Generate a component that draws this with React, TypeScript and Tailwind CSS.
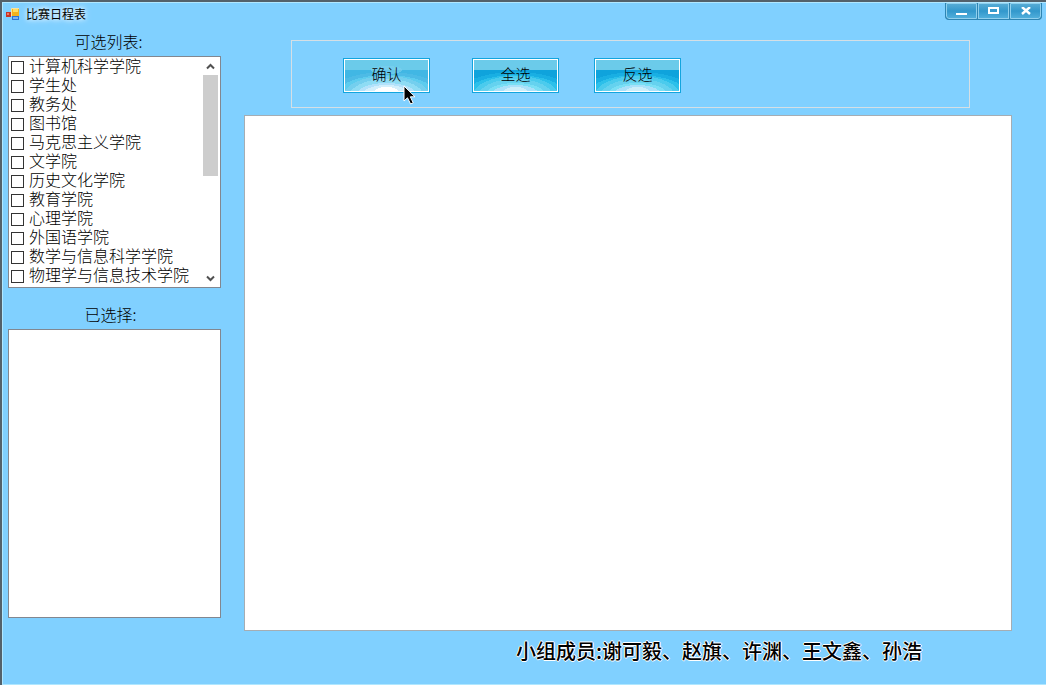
import React from 'react';

const colleges = [
  '计算机科学学院', '学生处', '教务处', '图书馆', '马克思主义学院', '文学院',
  '历史文化学院', '教育学院', '心理学院', '外国语学院', '数学与信息科学学院', '物理学与信息技术学院',
];

function AppIcon() {
  return (
    <svg width="15" height="15" viewBox="0 0 15 15" aria-hidden="true">
      <rect x="6" y="1" width="7" height="8" fill="#f2b21e" />
      <rect x="7" y="2" width="5" height="3" fill="#ffdc62" />
      <rect x="6" y="9" width="7" height="4" fill="#2c73d4" />
      <rect x="7" y="10" width="5" height="2" fill="#78b4f4" />
      <rect x="0" y="5" width="5" height="5" fill="#c93426" />
      <rect x="1" y="6" width="2" height="2" fill="#f07a68" />
      <path d="M5.5 9V1.5H13" fill="none" stroke="#f8e3a0" />
    </svg>
  );
}

function TitleBar() {
  return (
    <header className="flex h-[26px] items-start justify-between pl-[3px] pr-1">
      <div className="flex h-[22px] items-center gap-[5px]">
        <AppIcon />
        <h1 className="text-[12px] leading-4 text-black [text-shadow:0_0_4px_#fff,0_0_7px_#fff]">比赛日程表</h1>
      </div>
      <div className="flex gap-px overflow-hidden rounded-b-[4px] border border-t-0 border-[#2e85b3] bg-[#2e85b3]">
        <button aria-label="最小化" className="flex h-[16px] w-[31px] items-center justify-center rounded-bl-[3px] border border-[#8fd0ee] bg-linear-to-b from-[#55abd5] via-[#3298cc] to-[#4faedb]">
          <svg width="11" height="10" viewBox="0 0 11 10"><path d="M0 7h11v2H0z" fill="#fff" /></svg>
        </button>
        <button aria-label="最大化" className="flex h-[16px] w-[31px] items-center justify-center border border-[#8fd0ee] bg-linear-to-b from-[#55abd5] via-[#3298cc] to-[#4faedb]">
          <svg width="11" height="8" viewBox="0 0 11 8"><path d="M1 1h9v5H1z" fill="none" stroke="#fff" strokeWidth="2" /></svg>
        </button>
        <button aria-label="关闭" className="flex h-[16px] w-[31px] items-center justify-center rounded-br-[3px] border border-[#8fd0ee] bg-linear-to-b from-[#55abd5] via-[#3298cc] to-[#4faedb]">
          <svg width="10" height="8" viewBox="0 0 10 8"><path d="M1 0l8 7M9 0L1 7" stroke="#fff" strokeWidth="2.4" /></svg>
        </button>
      </div>
    </header>
  );
}

function GlossButton({ label, hot = false, children }: { label: string; hot?: boolean; children?: React.ReactNode }) {
  return (
    <button className="relative h-[35px] w-[87px] border border-[#12a5de] bg-white p-px">
      <svg className="block h-full w-full" viewBox="0 0 83 31" preserveAspectRatio="none" shapeRendering="crispEdges" aria-hidden="true">
        <rect width="83" height="31" fill={hot ? '#41b7e4' : '#0fa3dc'} />
        <ellipse cx="41.5" cy="36" rx="60" ry="24" fill={hot ? '#4dbbe6' : '#19afe3'} />
        <ellipse cx="41.5" cy="36" rx="51" ry="21" fill={hot ? '#5dccee' : '#2cc0ea'} />
        <ellipse cx="41.5" cy="36" rx="43" ry="20" fill={hot ? '#74cfee' : '#4bcbed'} />
        <ellipse cx="41.5" cy="36" rx="37" ry="17" fill={hot ? '#8edcf4' : '#65d2ef'} />
        <ellipse cx="41.5" cy="36" rx="31" ry="13" fill={hot ? '#b2e2fb' : '#7adff5'} />
        <ellipse cx="41.5" cy="35" rx="24" ry="10" fill={hot ? '#d2effc' : '#a9e1fa'} />
        <ellipse cx="41.5" cy="33" rx="13" ry="6" fill={hot ? '#ffffff' : '#cceefa'} />
        <rect width="83" height="10" fill="#6bcbea" />
        {hot && <ellipse cx="41.5" cy="10" rx="16" ry="4" fill="#7bd0ee" opacity=".6" />}
      </svg>
      <span className="absolute inset-x-0 top-0 pt-[5px] text-center text-[15px] leading-5 font-light text-black">{label}</span>
      {children}
    </button>
  );
}

export default function App() {
  return (
    <div className="flex min-h-screen flex-col border-t-2 border-l-2 border-[#53616b] bg-[#80d0ff] font-['Noto_Sans_CJK_SC',sans-serif] text-black">
      <div className="flex flex-1 flex-col border-t border-b border-l border-[#b0e7ff]">
        <TitleBar />
        <div className="flex flex-1 pr-[34px] pl-[5px]">
          <aside className="flex w-[213px] shrink-0 flex-col">
            <h2 id="available" className="mt-[2px] mb-[5px] pr-3 text-center text-[16px] leading-5 font-light">可选列表:</h2>
            <section aria-labelledby="available" className="flex border border-[#828790] bg-white">
              <ul className="min-w-0 flex-1 pb-[2px]">
                {colleges.map((name) => (
                  <li key={name}>
                    <label className="flex h-[19px] items-start gap-[5px] pl-[2px] text-[16px] leading-[17px] font-light whitespace-nowrap">
                      <input type="checkbox" className="mt-1 h-[13px] w-[13px] shrink-0 appearance-none border border-[#333] bg-white checked:bg-[#168ccc]" />
                      {name}
                    </label>
                  </li>
                ))}
              </ul>
              <div className="flex w-[17px] shrink-0 flex-col items-start bg-white">
                <button aria-label="向上滚动" className="flex h-[18px] w-[15px] items-center justify-center">
                  <svg width="9" height="7" viewBox="0 0 9 7"><path d="M1 5.5l3.5-3.5L8 5.5" fill="none" stroke="#505050" strokeWidth="2" /></svg>
                </button>
                <div className="h-[101px] w-[15px] bg-[#cdcdcd]" />
                <button aria-label="向下滚动" className="mt-auto flex h-[18px] w-[15px] items-center justify-center">
                  <svg width="9" height="7" viewBox="0 0 9 7"><path d="M1 1.5L4.5 5 8 1.5" fill="none" stroke="#505050" strokeWidth="2" /></svg>
                </button>
              </div>
            </section>
            <h2 id="selected" className="mt-4 mb-[5px] pr-2 text-center text-[16px] leading-5 font-light">已选择:</h2>
            <section aria-labelledby="selected" className="mb-[66px] min-h-[200px] flex-1 border border-[#828790] bg-white" />
          </aside>
          <main className="ml-[23px] flex min-w-0 flex-1 flex-col pt-[11px]">
            <div className="mr-[42px] ml-[47px] flex h-[68px] items-start border border-[#d5dfe5] pt-[17px] pl-[51px]">
              <GlossButton label="确认" hot>
                <svg className="absolute top-[26px] left-[59px] z-10" width="13" height="21" viewBox="0 0 13 21" aria-hidden="true">
                  <path d="M1 1v15l3.5-3.2L7.6 19l2.6-1.2-2.9-6H12z" fill="#000" stroke="#fff" />
                </svg>
              </GlossButton>
              <div className="ml-[42px]"><GlossButton label="全选" /></div>
              <div className="ml-[35px]"><GlossButton label="反选" /></div>
            </div>
            <section aria-label="日程" className="mt-[7px] min-h-[300px] flex-1 border border-[#a5adb3] bg-white" />
            <footer className="h-[53px] pt-[7px] pr-[90px] text-right text-[20px] leading-[26px] font-medium whitespace-nowrap [text-shadow:1px_0_0_#fff,-1px_0_0_#fff,0_1px_0_#fff,0_-1px_0_#fff]">
              小组成员:谢可毅、赵旗、许渊、王文鑫、孙浩
            </footer>
          </main>
        </div>
      </div>
    </div>
  );
}
